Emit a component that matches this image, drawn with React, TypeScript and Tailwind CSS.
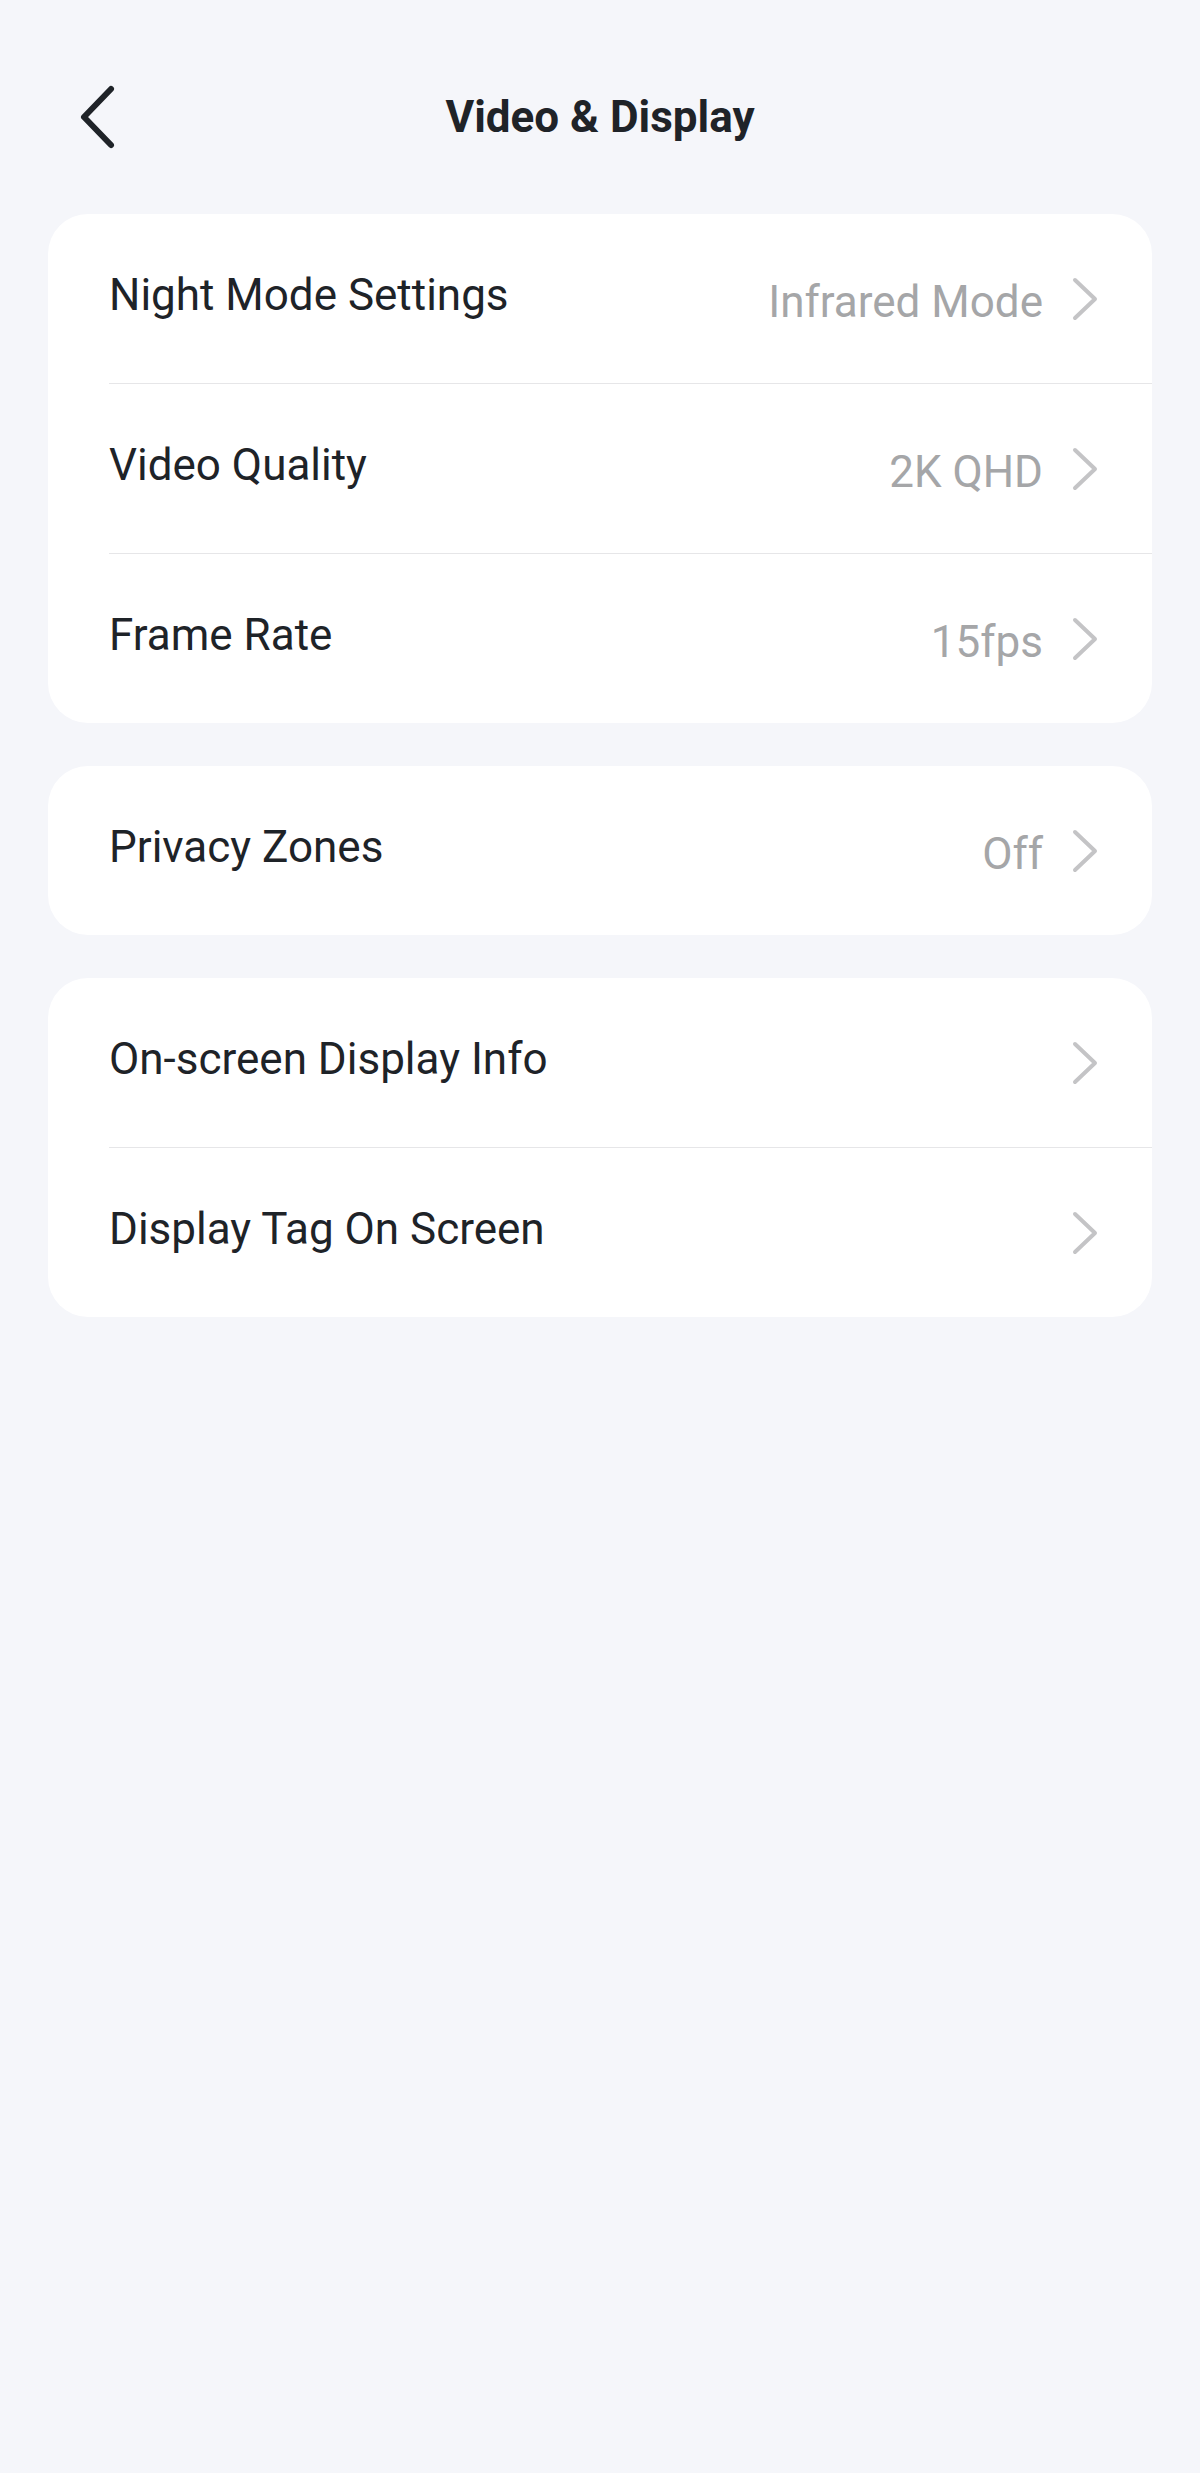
const groups: { label: string; value?: string }[][] = [
  [
    { label: "Night Mode Settings", value: "Infrared Mode" },
    { label: "Video Quality", value: "2K QHD" },
    { label: "Frame Rate", value: "15fps" },
  ],
  [{ label: "Privacy Zones", value: "Off" }],
  [{ label: "On-screen Display Info" }, { label: "Display Tag On Screen" }],
];

function ChevronRight() {
  return (
    <svg width="28" height="46" viewBox="0 0 28 46" fill="none" className="shrink-0">
      <polyline
        points="4,4 24,23 4,42"
        stroke="#c4c4c6"
        strokeWidth="4"
        strokeLinecap="round"
        strokeLinejoin="round"
      />
    </svg>
  );
}

function Row({ label, value, first }: { label: string; value?: string; first: boolean }) {
  return (
    <div className="pl-[61px]">
      <div
        className={
          first
            ? "flex h-[169px] items-center justify-between pr-[53px]"
            : "flex h-[170px] items-center justify-between border-t border-[#e6e6e8] pr-[53px]"
        }
      >
        <span className="mb-[8px] text-[44px] leading-none text-[#1e2328]">{label}</span>
        <div className="flex items-center gap-[28px]">
          {value && (
            <span className="mt-[6px] text-[44px] leading-none text-[#a5a6a8]">{value}</span>
          )}
          <ChevronRight />
        </div>
      </div>
    </div>
  );
}

export default function App() {
  return (
    <main
      className="min-h-[2473px] bg-[#f5f6fa] px-[48px] pt-[60px]"
      style={{ fontFamily: "Roboto, 'Liberation Sans', sans-serif" }}
    >
      <header className="grid h-[114px] grid-cols-[1fr_auto_1fr] items-center">
        <div className="pl-[30px]">
          <svg width="40" height="68" viewBox="0 0 40 68" fill="none">
            <polyline
              points="33,6 6,34 33,62"
              stroke="#1f2328"
              strokeWidth="6"
              strokeLinecap="round"
              strokeLinejoin="round"
            />
          </svg>
        </div>
        <h1 className="text-[44px] font-bold leading-none text-[#1f2328]">Video &amp; Display</h1>
        <div />
      </header>

      <div className="mt-[40px] flex flex-col gap-[43px]">
        {groups.map((rows, gi) => (
          <section key={gi} className="overflow-hidden rounded-[40px] bg-white">
            {rows.map((r, i) => (
              <Row key={r.label} label={r.label} value={r.value} first={i === 0} />
            ))}
          </section>
        ))}
      </div>
    </main>
  );
}
